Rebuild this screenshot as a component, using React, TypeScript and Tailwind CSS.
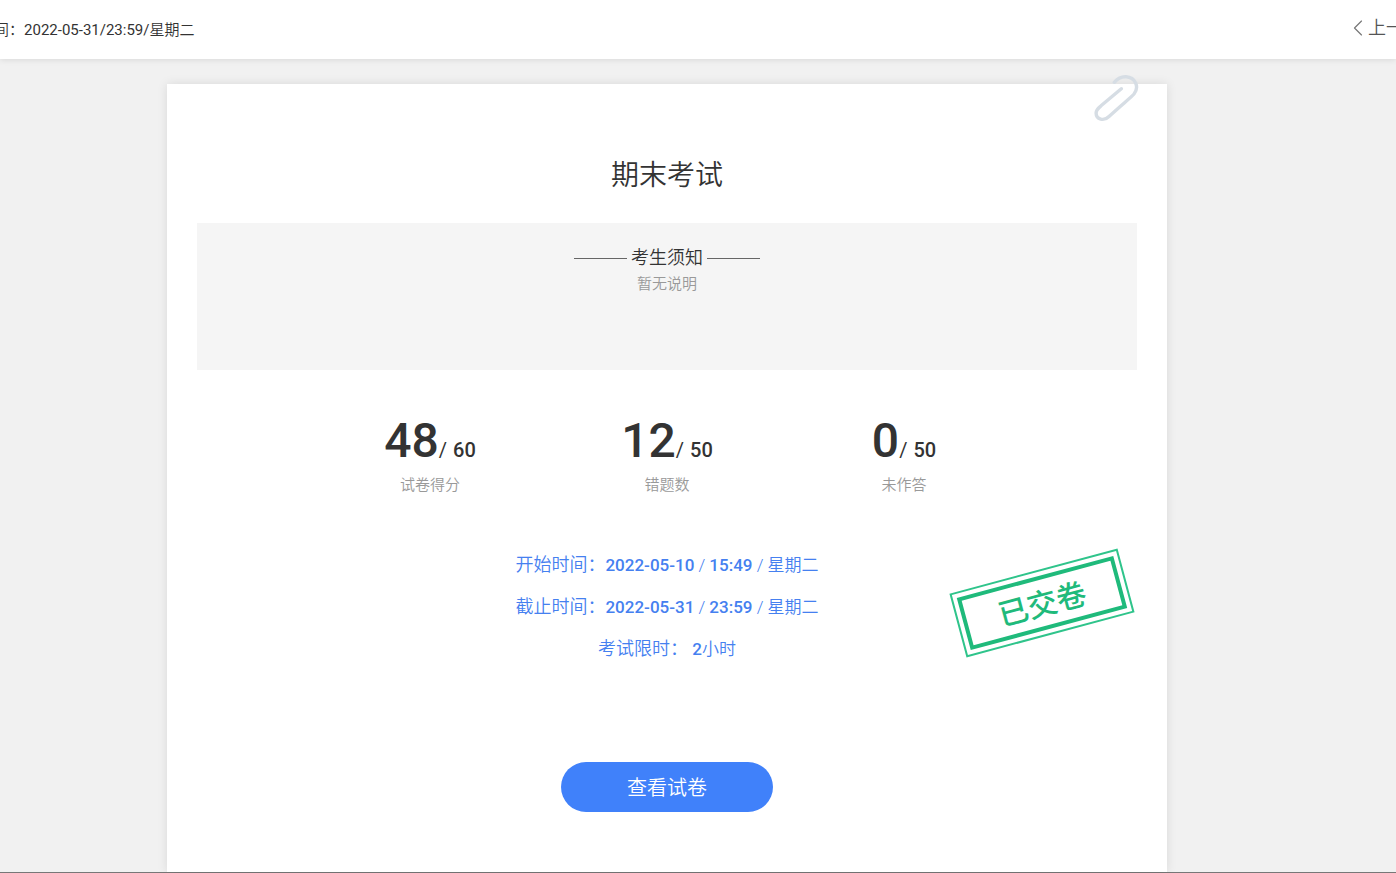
import { ChevronLeft } from "lucide-react"

const stats = [
  { value: 48, total: 60, label: "试卷得分" },
  { value: 12, total: 50, label: "错题数" },
  { value: 0, total: 50, label: "未作答" },
]

const times = [
  { label: "开始时间：", date: "2022-05-10", time: "15:49", day: "星期二" },
  { label: "截止时间：", date: "2022-05-31", time: "23:59", day: "星期二" },
]

function TopBar() {
  return (
    <header className="relative flex h-[59px] items-center justify-between overflow-x-clip bg-white text-[#333] shadow-[0_1px_6px_rgba(0,0,0,0.1)]">
      <div className="-ml-1.5 flex pt-px text-[15px] leading-6 whitespace-nowrap">
        <span className="font-[350]">间：</span>
        <span>2022-05-31/23:59/</span>
        <span className="font-[350]">星期二</span>
      </div>
      <a href="#" className="-mr-2 flex items-center pb-1 text-lg font-[350] whitespace-nowrap text-[#555]">
        <ChevronLeft className="-mr-1 size-7 text-[#777]" strokeWidth={1} />
        上一
      </a>
    </header>
  )
}

function PaperClip() {
  return (
    <svg className="absolute -top-3 right-[27px] h-[52px] w-12" viewBox="0 0 48 52" fill="none" aria-hidden="true">
      <path
        d="M22.3 10.3C26 6 30 4.6 34 4.8C43.500 5.500 47.500 15 42 22C39 25.500 30 32.500 17 44.500C12 49.500 4.100 47.500 4.100 41C4.100 38 6.500 35.800 9 33.800L29.300 16.700"
        stroke="#d6dde4"
        strokeWidth="3.4"
        strokeLinecap="round"
      />
    </svg>
  )
}

function Stamp() {
  return (
    <div className="absolute top-[486px] right-[38px] h-[66px] w-[174px] -rotate-15 border-2 border-[#2fc48b] p-1">
      <div className="flex h-full items-center justify-center border-4 border-[#1fba7b] pt-1 text-3xl font-medium text-[#1fba7b]">
        已交卷
      </div>
    </div>
  )
}

export default function App() {
  return (
    <div className="flex min-h-screen flex-col border-b border-[#777] bg-[#f1f1f1] font-[Roboto,'Noto_Sans_CJK_SC',sans-serif]">
      <TopBar />
      <main className="flex grow pt-[25px] pr-[62px]">
        <section className="relative mx-auto w-full max-w-[1000px] bg-white px-[30px] pt-[72px] pb-10 text-center text-[#333] shadow-[0_0_10px_rgba(0,0,0,0.1)]">
          <PaperClip />
          <h1 className="text-[28px] leading-10 font-[350]">期末考试</h1>

          <div className="mt-[27px] min-h-[147px] bg-[#f5f5f5] pt-[21px]">
            <h2 className="flex items-center justify-center gap-1 text-lg leading-7 font-[350]">
              <span className="h-px w-[53px] bg-[#666]" />
              考生须知
              <span className="h-px w-[53px] bg-[#666]" />
            </h2>
            <p className="text-[15px] leading-6 font-[350] text-[#999]">暂无说明</p>
          </div>

          <div className="mx-auto mt-[47px] grid max-w-[711px] grid-cols-3">
            {stats.map((s) => (
              <div key={s.label}>
                <div className="flex items-baseline justify-center">
                  <span className="text-5xl leading-12 font-medium">{s.value}</span>
                  <span className="mr-1.5 text-xl">/</span>
                  <span className="text-xl font-medium">{s.total}</span>
                </div>
                <div className="mt-2 text-[15px] leading-6 font-[350] text-[#999]">{s.label}</div>
              </div>
            ))}
          </div>

          <div className="mt-14 flex flex-col gap-[18px] text-[17px] leading-6 font-[350] text-[#4580f0]">
            {times.map((t) => (
              <p key={t.label}>
                <span className="text-[18px]">{t.label}</span>
                <span className="font-medium">{t.date}</span> / <span className="font-medium">{t.time}</span> / {t.day}
              </p>
            ))}
            <p>
              <span className="text-[18px]">考试限时：</span> <span className="font-medium">2</span>小时
            </p>
          </div>

          <button className="mt-[101px] h-[50px] w-[212px] cursor-pointer rounded-full bg-[#4081fa] pt-0.5 text-xl font-[350] text-white">
            查看试卷
          </button>

          <Stamp />
        </section>
      </main>
    </div>
  )
}
